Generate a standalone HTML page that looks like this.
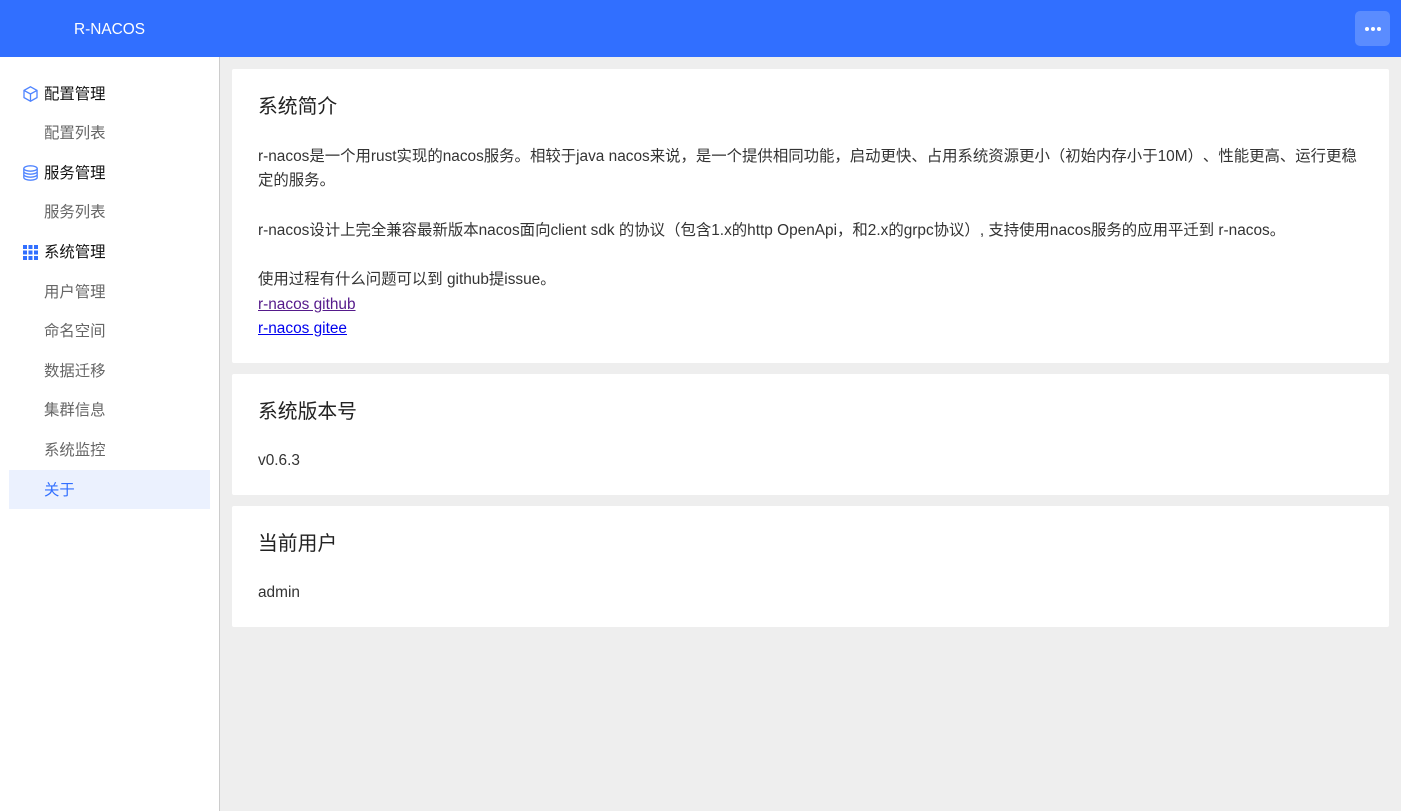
<!DOCTYPE html>
<html lang="zh">
<head>
<meta charset="utf-8">
<title>R-NACOS</title>
<style>
html,body{margin:0;padding:0;width:1401px;height:811px;overflow:hidden;background:#eee;font-family:"Liberation Sans","Noto Sans CJK SC",sans-serif;font-size:15.4px;color:#333;text-spacing-trim:space-all}
.a{position:absolute;white-space:nowrap;margin-top:1px}
#hd{position:absolute;left:0;top:0;width:1401px;height:57px;background:#316fff}
#brand{left:74px;top:19px;font-size:15.4px;line-height:20px;color:#fff}
#more{position:absolute;left:1355px;top:11px;width:35px;height:35px;border-radius:5px;background:#5a8cff}
#more i{position:absolute;top:16px;width:4px;height:4px;border-radius:50%;background:#fff}
#side{position:absolute;left:0;top:57px;width:219px;height:754px;background:#fff;border-right:1px solid #ccc}
.m{left:44px;font-size:15.4px;line-height:20px;color:#111}
.s{left:44px;font-size:15.4px;line-height:20px;color:#666}
#act{position:absolute;left:9px;top:470px;width:201px;height:39px;background:#ebf1fe}
.card{position:absolute;left:232px;width:1157px;background:#fff;border-radius:2px}
.t{left:258px;font-size:19.8px;line-height:26px;color:#222}
.p{left:258px;font-size:15.4px;line-height:24px;color:#333}
a{color:#00e}
a.v{color:#551a8b}
svg{position:absolute}
</style>
</head>
<body>
<div id="hd"></div>
<div class="a" id="brand">R-NACOS</div>
<div id="more"><i style="left:10px"></i><i style="left:16px"></i><i style="left:22px"></i></div>

<div id="side"></div>
<svg style="left:23px;top:86px" width="15" height="16" viewBox="0 0 15 16" fill="none" stroke="#316fff" stroke-width="1.3" opacity=".85"><path d="M7.500 .8 14 4.400v7.200L7.500 15.200 1 11.600V4.400z"/><path d="M1 4.400 7.500 8 14 4.400M7.500 8v7.200"/></svg>
<svg style="left:23px;top:165px" width="15" height="16" viewBox="0 0 15 16" fill="none" stroke="#316fff" stroke-width="1.3" opacity=".85"><ellipse cx="7.500" cy="3.500" rx="6.700" ry="2.700"/><path d="M.8 3.500v9c0 1.500 3 2.700 6.700 2.700s6.700-1.200 6.700-2.700v-9M.8 6.500c0 1.500 3 2.700 6.700 2.700s6.700-1.200 6.700-2.700M.8 9.500c0 1.500 3 2.700 6.700 2.700s6.700-1.200 6.700-2.700"/></svg>
<svg style="left:23px;top:245px" width="15" height="15" viewBox="0 0 15 15" fill="#316fff"><rect width="4" height="4"/><rect x="5.500" width="4" height="4"/><rect x="11" width="4" height="4"/><rect y="5.500" width="4" height="4"/><rect x="5.500" y="5.500" width="4" height="4"/><rect x="11" y="5.500" width="4" height="4"/><rect y="11" width="4" height="4"/><rect x="5.500" y="11" width="4" height="4"/><rect x="11" y="11" width="4" height="4"/></svg>

<div class="a m" style="top:84px">配置管理</div>
<div class="a s" style="top:123px">配置列表</div>
<div class="a m" style="top:163px">服务管理</div>
<div class="a s" style="top:202px">服务列表</div>
<div class="a m" style="top:242px">系统管理</div>
<div class="a s" style="top:282px">用户管理</div>
<div class="a s" style="top:321px">命名空间</div>
<div class="a s" style="top:361px">数据迁移</div>
<div class="a s" style="top:400px">集群信息</div>
<div class="a s" style="top:440px">系统监控</div>
<div id="act"></div>
<div class="a s" style="top:480px;color:#316fff">关于</div>

<div class="card" style="top:69px;height:294px"></div>
<div class="card" style="top:374px;height:121px"></div>
<div class="card" style="top:506px;height:121px"></div>

<div class="a t" style="top:93px">系统简介</div>
<div class="a p" style="top:144px">r-nacos是一个用rust实现的nacos服务。相较于java nacos来说，是一个提供相同功能，启动更快、占用系统资源更小（初始内存小于10M）、性能更高、运行更稳</div>
<div class="a p" style="top:168px">定的服务。</div>
<div class="a p" style="top:218px">r-nacos设计上完全兼容最新版本nacos面向client sdk 的协议（包含1.x的http OpenApi，和2.x的grpc协议）, 支持使用nacos服务的应用平迁到 r-nacos。</div>
<div class="a p" style="top:267px">使用过程有什么问题可以到 github提issue。</div>
<div class="a p" style="top:292px"><a class="v" href="#">r-nacos github</a></div>
<div class="a p" style="top:316px"><a href="#">r-nacos gitee</a></div>

<div class="a t" style="top:398px">系统版本号</div>
<div class="a p" style="top:448px">v0.6.3</div>

<div class="a t" style="top:530px">当前用户</div>
<div class="a p" style="top:580px">admin</div>
</body>
</html>
